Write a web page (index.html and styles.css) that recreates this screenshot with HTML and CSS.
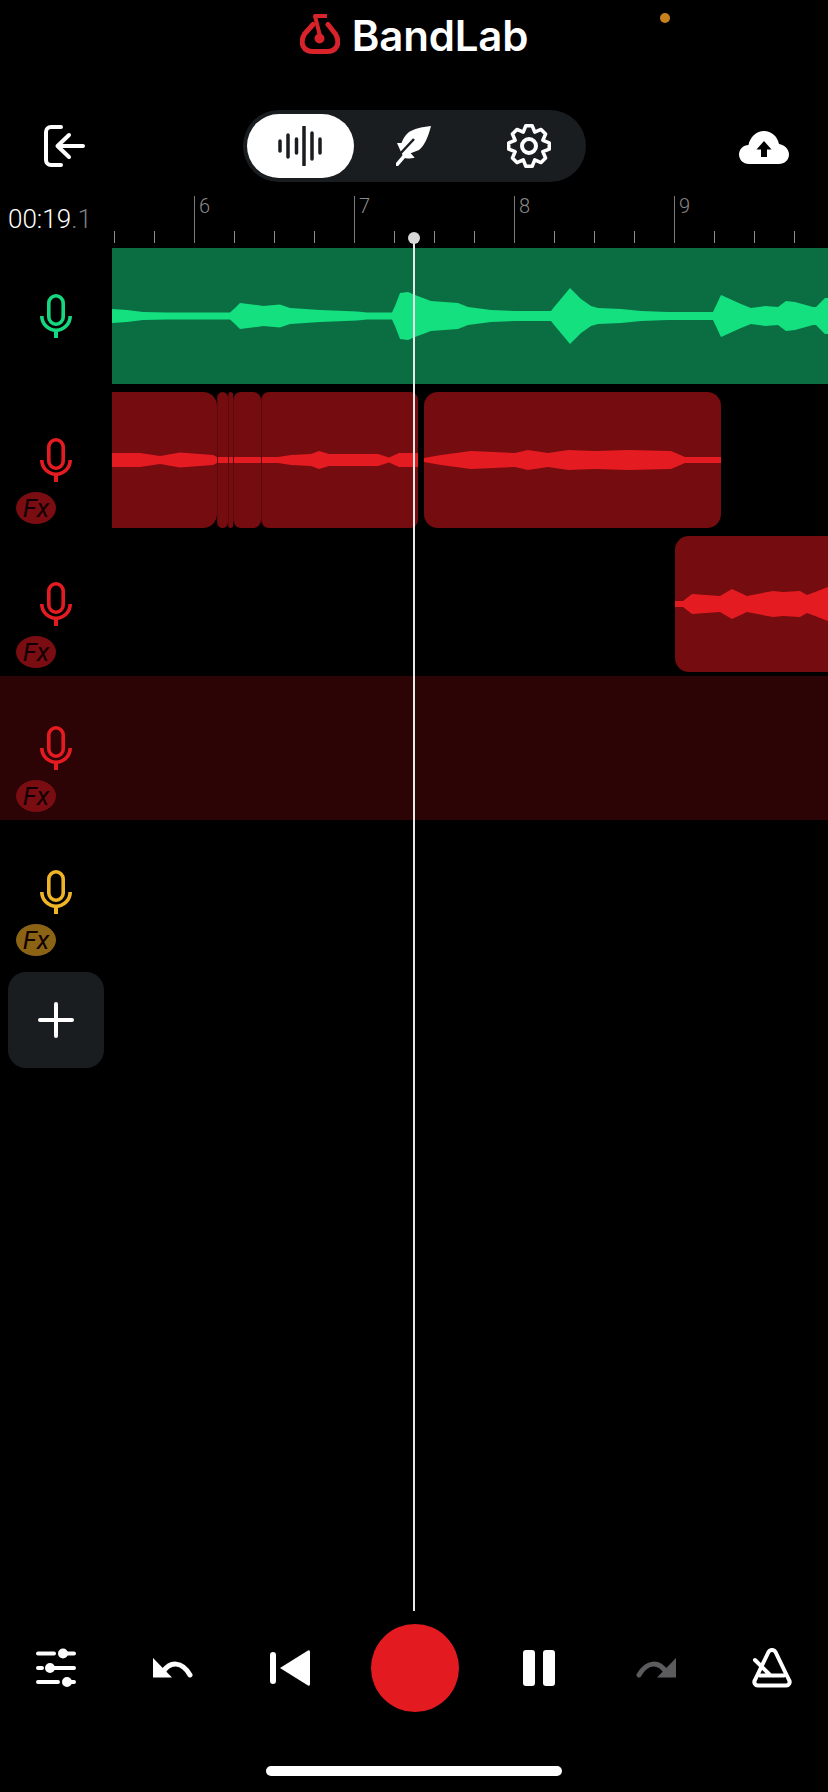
FILE: index.html
```html
<!DOCTYPE html>
<html lang="en">
<head>
<meta charset="utf-8">
<title>BandLab Studio</title>
<link rel="stylesheet" href="styles.css">
</head>
<body>
<div class="app">
  <header class="brand">
    <svg class="brand-mark" width="40" height="42" viewBox="0 0 40 42" fill="none">
      <path d="M13 11.500 L4.500 21 C-1 31 4 38.500 13 38.500 H27 C36 38.500 41 31 35.500 21 L28 11.500" stroke="#d8232a" stroke-width="5" stroke-linecap="round" stroke-linejoin="round"/>
      <path d="M27 3 H15 L20.500 25" stroke="#d8232a" stroke-width="4" stroke-linejoin="round"/>
      <circle cx="19.500" cy="25.500" r="5" fill="#d8232a"/>
    </svg>
    <span class="brand-name">BandLab</span>
  </header>
  <span class="status-dot"></span>

  <nav class="toolbar">
    <svg class="exit" width="41" height="42" viewBox="0 0 41 42" fill="none" stroke="#fff" stroke-width="4" stroke-linecap="round" stroke-linejoin="round">
      <path d="M17 2 H7 a5 5 0 0 0 -5 5 V35 a5 5 0 0 0 5 5 H17"/>
      <path d="M39 21 H14 M25 10 L13.500 21 L25 32"/>
    </svg>
    <div class="tabs">
      <div class="tab active">
        <svg width="44" height="40" viewBox="0 0 44 40" stroke="#1a1d20" stroke-width="3.500" stroke-linecap="round">
          <path d="M2 15 V25 M10 9 V31 M18.500 13 V27 M26 1 V39 M34 7 V33 M42 13 V27"/>
        </svg>
      </div>
      <div class="tab">
        <svg width="36" height="40" viewBox="0 0 36 40">
          <path fill="#fff" d="M35 0 C25 1 18 3 13 6 C9 9 7 13 5.500 17 L1 17 L5 26 L8 32 C12 33 16 32 18.700 31.700 L14.700 27.300 L23 24 C28 20 32 12 35 0 Z"/>
          <path d="M3 29 L18 13" stroke="#1a1d20" stroke-width="2.500"/>
          <path d="M1 38.500 L10 28" stroke="#fff" stroke-width="3.500" stroke-linecap="round"/>
        </svg>
      </div>
      <div class="tab">
        <svg width="48" height="48" viewBox="0 0 48 48" fill="none" stroke="#fff" stroke-width="3.500" stroke-linejoin="round">
          <polygon points="20.800,3.750 27.200,3.750 29.740,10.140 36.050,7.420 40.580,11.950 37.860,18.260 44.250,20.800 44.250,27.200 37.860,29.740 40.580,36.050 36.050,40.580 29.740,37.860 27.200,44.250 20.800,44.250 18.260,37.860 11.950,40.580 7.420,36.050 10.140,29.740 3.750,27.200 3.750,20.800 10.140,18.260 7.420,11.950 11.950,7.420 18.260,10.140"/>
          <circle cx="24" cy="24" r="7" stroke-width="4"/>
        </svg>
      </div>
    </div>
    <svg class="upload" width="50" height="33" viewBox="0 0 50 33">
      <path fill="#fff" d="M10 33 C4 33 0 28.500 0 23.500 C0 18 4.500 14 9.500 14 C11 6 17.500 0 25 0 C32.500 0 38.500 5.500 40 13 C45.500 14 50 18 50 23.500 C50 29 45.500 33 40 33 Z"/>
      <path fill="#000" d="M25 10 L32.500 18.500 H28 V26 H22 V18.500 H17.500 Z"/>
    </svg>
  </nav>

  <div class="timebar">
    <div class="clock">00:19<span class="clock-frac">.1</span></div>
    <div class="ruler">
      <span class="beat">6</span>
      <span class="beat">7</span>
      <span class="beat">8</span>
      <span class="beat">9</span>
    </div>
  </div>

  <main class="tracks">
    <section class="track track-green">
      <div class="track-head">
        <svg class="mic" width="32" height="44" viewBox="0 0 32 44" fill="none" stroke="currentColor" stroke-width="3.600"><rect x="8.800" y="1.800" width="14.400" height="28.400" rx="7.200"/><path d="M1.800 22 a14.200 14.200 0 0 0 28.400 0"/><path d="M16 37 V44" stroke-width="4"/></svg>
      </div>
      <div class="lane">
        <div class="clip clip-full">
          <svg class="wave" width="716" height="136" viewBox="112 0 716 136">
            <polygon id="green-wave" points="112,68 112,61 127,62 143,64 167,64.500 200,64.500 230,64.500 235,60 240,55 257,57 263,58 280,56.500 290,60 320,62 357,63.500 367,64.500 392,64.500 395,58 400,45 408,44 415,47 431,53 458,55 468,59 491,62 515,63 551,63 555,58 570,40 581,51 591,58 598,60 621,61 641,63 668,64 713,64 721,47 741,56 751,60 765,58 778,59 786,53 795,54 813,59 816,59 825,50 828,50 828,68"/>
            <use href="#green-wave" transform="matrix(1 0 0 -1 0 136)"/>
          </svg>
        </div>
      </div>
    </section>

    <section class="track track-red">
      <div class="track-head">
        <svg class="mic" width="32" height="44" viewBox="0 0 32 44" fill="none" stroke="currentColor" stroke-width="3.600"><rect x="8.800" y="1.800" width="14.400" height="28.400" rx="7.200"/><path d="M1.800 22 a14.200 14.200 0 0 0 28.400 0"/><path d="M16 37 V44" stroke-width="4"/></svg>
        <span class="fx">Fx</span>
      </div>
      <div class="lane">
        <div class="clip clip-cut c105">
          <svg class="wave" width="105" height="136" viewBox="112 0 105 136"><polygon points="112,61 140,61 160,64 180,60.500 213,63 217,65 217,71 213,73 180,75.500 160,72 140,75 112,75"/></svg>
        </div>
        <div class="clip clip-sliver c11">
          <svg class="wave" width="11" height="136" viewBox="0 0 11 136"><rect y="65" width="11" height="6"/></svg>
        </div>
        <div class="clip clip-sliver c5">
          <svg class="wave" width="5" height="136" viewBox="0 0 5 136"><rect y="65" width="5" height="6"/></svg>
        </div>
        <div class="clip clip-sliver c28">
          <svg class="wave" width="28" height="136" viewBox="0 0 28 136"><rect y="65" width="28" height="6"/></svg>
        </div>
        <div class="clip clip-sliver c157">
          <svg class="wave" width="157" height="136" viewBox="261 0 157 136"><polygon points="261,65 277,65 290,63 310,62 318,59 328,62 377,62 388,65.500 398,61 418,61 418,75 398,75 388,70.500 377,74 328,74 318,77 310,74 290,73 277,71 261,71"/></svg>
        </div>
        <div class="clip c297">
          <svg class="wave" width="297" height="136" viewBox="424 0 297 136"><polygon points="424,66 441,63 471,59 515,61 528,58 548,61 568,58 595,59 628,58 671,59 685,65 721,65 721,71 685,71 671,77 628,78 595,77 568,78 548,75 528,78 515,75 471,77 441,73 424,70"/></svg>
        </div>
      </div>
    </section>

    <section class="track track-red">
      <div class="track-head">
        <svg class="mic" width="32" height="44" viewBox="0 0 32 44" fill="none" stroke="currentColor" stroke-width="3.600"><rect x="8.800" y="1.800" width="14.400" height="28.400" rx="7.200"/><path d="M1.800 22 a14.200 14.200 0 0 0 28.400 0"/><path d="M16 37 V44" stroke-width="4"/></svg>
        <span class="fx">Fx</span>
      </div>
      <div class="lane lane-end">
        <div class="clip clip-open c153">
          <svg class="wave" width="153" height="136" viewBox="675 0 153 136"><polygon points="675,65 683,65 692,58 720,60 732,53 747,60 773,55 783,56 800,55 807,59 828,51 828,85 807,77 800,81 783,80 773,81 747,76 732,83 720,76 692,78 683,71 675,71"/></svg>
        </div>
      </div>
    </section>

    <section class="track track-red track-selected">
      <div class="track-head">
        <svg class="mic" width="32" height="44" viewBox="0 0 32 44" fill="none" stroke="currentColor" stroke-width="3.600"><rect x="8.800" y="1.800" width="14.400" height="28.400" rx="7.200"/><path d="M1.800 22 a14.200 14.200 0 0 0 28.400 0"/><path d="M16 37 V44" stroke-width="4"/></svg>
        <span class="fx">Fx</span>
      </div>
      <div class="lane"></div>
    </section>

    <section class="track track-yellow">
      <div class="track-head">
        <svg class="mic" width="32" height="44" viewBox="0 0 32 44" fill="none" stroke="currentColor" stroke-width="3.600"><rect x="8.800" y="1.800" width="14.400" height="28.400" rx="7.200"/><path d="M1.800 22 a14.200 14.200 0 0 0 28.400 0"/><path d="M16 37 V44" stroke-width="4"/></svg>
        <span class="fx">Fx</span>
      </div>
      <div class="lane"></div>
    </section>
  </main>

  <button class="add-track" type="button" aria-label="Add track">
    <svg width="36" height="36" viewBox="0 0 36 36" stroke="#fff" stroke-width="4" stroke-linecap="round"><path d="M18 2 V34 M2 18 H34"/></svg>
  </button>

  <div class="playhead"></div>

  <footer class="transport">
    <div class="transport-group">
      <svg width="40" height="40" viewBox="0 0 40 40" fill="#fff" stroke="#fff" stroke-width="4" stroke-linecap="round">
        <path d="M2 5.500 H18 M27 5.500 H38 M2 20 H6 M14 20 H38 M2 34 H22 M31 34 H38" fill="none"/>
        <circle cx="27" cy="5.500" r="3" /><circle cx="14" cy="20" r="3"/><circle cx="31" cy="34" r="3"/>
      </svg>
      <svg width="40" height="40" viewBox="0 0 40 40" fill="none">
        <path d="M0 10 V29.500 H19 Z" fill="#fff"/>
        <path d="M10 24 C17 13 29 13 37 27" stroke="#fff" stroke-width="5" stroke-linecap="round"/>
      </svg>
      <svg width="40" height="40" viewBox="0 0 40 40" fill="#fff">
        <rect x="0" y="4" width="6" height="32" rx="3"/>
        <path d="M10 20 L38 2.500 Q40 1.500 40 4 V36 Q40 38.500 38 37.500 Z"/>
      </svg>
    </div>
    <button class="record" type="button" aria-label="Record"></button>
    <div class="transport-group transport-group-right">
      <svg width="40" height="40" viewBox="0 0 40 40" fill="#fff">
        <rect x="4" y="2" width="12" height="36" rx="3"/>
        <rect x="24" y="2" width="12" height="36" rx="3"/>
      </svg>
      <svg width="40" height="40" viewBox="0 0 40 40" fill="none">
        <path d="M40 10 V29.500 H21 Z" fill="#5c5c5e"/>
        <path d="M30 24 C23 13 11 13 3 27" stroke="#5c5c5e" stroke-width="5" stroke-linecap="round"/>
      </svg>
      <svg width="40" height="40" viewBox="0 0 40 40" fill="none" stroke="#fff" stroke-width="4" stroke-linecap="round" stroke-linejoin="round">
        <path d="M16.500 4 a4 4 0 0 1 7 0 L37 32 a3.500 3.500 0 0 1 -3 5.500 H6 a3.500 3.500 0 0 1 -3 -5.500 Z"/>
        <path d="M8 27.500 H32 M3 12 L18 27"/>
      </svg>
    </div>
  </footer>
  <div class="home-bar"></div>
</div>
</body>
</html>
```

FILE: styles.css
```css
* { box-sizing: border-box; }

html, body {
  margin: 0;
  background: #000;
}

.app {
  position: relative;
  display: flex;
  flex-direction: column;
  width: 828px;
  height: 1792px;
  overflow: hidden;
  background: #000;
  color: #fff;
  font-family: Roboto, "Liberation Sans", sans-serif;
}

.brand {
  display: flex;
  align-items: flex-start;
  justify-content: center;
  gap: 12px;
  height: 110px;
  padding-top: 13px;
}

.brand-name {
  margin-top: -1px;
  font-family: Inter, "Liberation Sans", sans-serif;
  font-size: 42px;
  font-weight: 600;
  line-height: 48px;
  letter-spacing: -0.2px;
}

.status-dot {
  position: absolute;
  top: 13px;
  left: 660px;
  width: 10px;
  height: 10px;
  border-radius: 50%;
  background: #c9811f;
}

.toolbar {
  display: flex;
  align-items: center;
  height: 72px;
  padding: 0 39px 0 44px;
}

.tabs {
  display: flex;
  align-items: center;
  width: 343px;
  height: 72px;
  margin-left: 158px;
  padding: 4px;
  border-radius: 36px;
  background: #1a1d20;
}

.tab {
  display: flex;
  align-items: center;
  justify-content: center;
  width: 107px;
  height: 64px;
  border-radius: 32px;
}

.tab:nth-child(2) { margin-left: 7px; }
.tab:nth-child(3) { margin-left: 8px; }

.tab.active { background: #fff; }

.upload { margin-left: auto; margin-top: 2px; }

.timebar {
  display: flex;
  height: 62px;
}

.clock {
  flex: none;
  width: 112px;
  padding: 23px 0 0 8px;
  font-size: 26px;
  font-weight: 300;
  line-height: 28px;
  white-space: nowrap;
}

.clock-frac { color: #7d7d7d; }

.ruler {
  flex: 1;
  display: flex;
  height: 47px;
  margin-top: 14px;
  padding-left: 82px;
  background-image: repeating-linear-gradient(90deg, #8c8c8c 0 1px, transparent 1px 40px);
  background-position: 2px bottom;
  background-size: 100% 12px;
  background-repeat: no-repeat;
}

.beat {
  flex: none;
  width: 160px;
  border-left: 1px solid #7a7a7a;
  padding-left: 4px;
  color: #8a8a8a;
  font-size: 20px;
  font-weight: 300;
  line-height: 20px;
}

.tracks {
  display: flex;
  flex-direction: column;
}

.track {
  display: flex;
  height: 144px;
}

.track-green { color: #16d87f; }
.track-red { color: #e41c21; }
.track-yellow { color: #f0b429; }
.track-selected { background: #2c0406; }

.track-head {
  flex: none;
  display: flex;
  flex-direction: column;
  width: 112px;
  padding-top: 50px;
}

.mic { align-self: center; flex: none; }

.fx {
  display: block;
  width: 40px;
  height: 32px;
  margin: 10px 0 0 16px;
  border-radius: 50%;
  background: #7a0d11;
  color: #120001;
  font-size: 26px;
  font-style: italic;
  font-weight: 400;
  line-height: 32px;
  text-align: center;
}

.track-yellow .fx { background: #8a6414; }

.lane {
  flex: 1;
  display: flex;
  min-width: 0;
  padding: 4px 0;
}

.lane-end { justify-content: flex-end; }

.clip {
  flex: none;
  height: 136px;
  overflow: hidden;
  border-radius: 14px;
  background: #750c0f;
  fill: #e41c21;
}

.wave { display: block; }

.clip-full {
  width: 716px;
  border-radius: 0;
  background: #0b6e43;
  fill: #14e080;
}

.clip-cut { border-radius: 0 14px 14px 0; }
.clip-open { border-radius: 14px 0 0 14px; }

.clip-sliver {
  border-left: 1px solid #5a090c;
  border-radius: 8px;
}

.c105 { width: 105px; }
.c11 { width: 11px; }
.c5 { width: 5px; }
.c28 { width: 28px; }
.c157 { width: 157px; }
.c297 { width: 297px; margin-left: 6px; }
.c153 { width: 153px; }

.add-track {
  display: flex;
  align-items: center;
  justify-content: center;
  width: 96px;
  height: 96px;
  margin: 8px 0 0 8px;
  padding: 0;
  border: 0;
  border-radius: 18px;
  background: #1a1d20;
}

.playhead {
  position: absolute;
  top: 238px;
  left: 413px;
  width: 2px;
  height: 1373px;
  background: #e9e9e9;
}

.playhead::before {
  content: "";
  position: absolute;
  top: -6px;
  left: -5px;
  width: 12px;
  height: 12px;
  border-radius: 50%;
  background: #d9d9d9;
}

.transport {
  display: flex;
  align-items: center;
  justify-content: space-between;
  height: 88px;
  margin-top: auto;
  padding: 0 36px;
}

.transport-group {
  display: flex;
  align-items: center;
  gap: 77px;
}

.transport-group-right { gap: 76.500px; }

.record {
  width: 88px;
  height: 88px;
  padding: 0;
  border: 0;
  border-radius: 50%;
  background: #e31b20;
}

.home-bar {
  flex: none;
  width: 296px;
  height: 10px;
  margin: 54px 0 16px 266px;
  border-radius: 5px;
  background: #fff;
}
```
